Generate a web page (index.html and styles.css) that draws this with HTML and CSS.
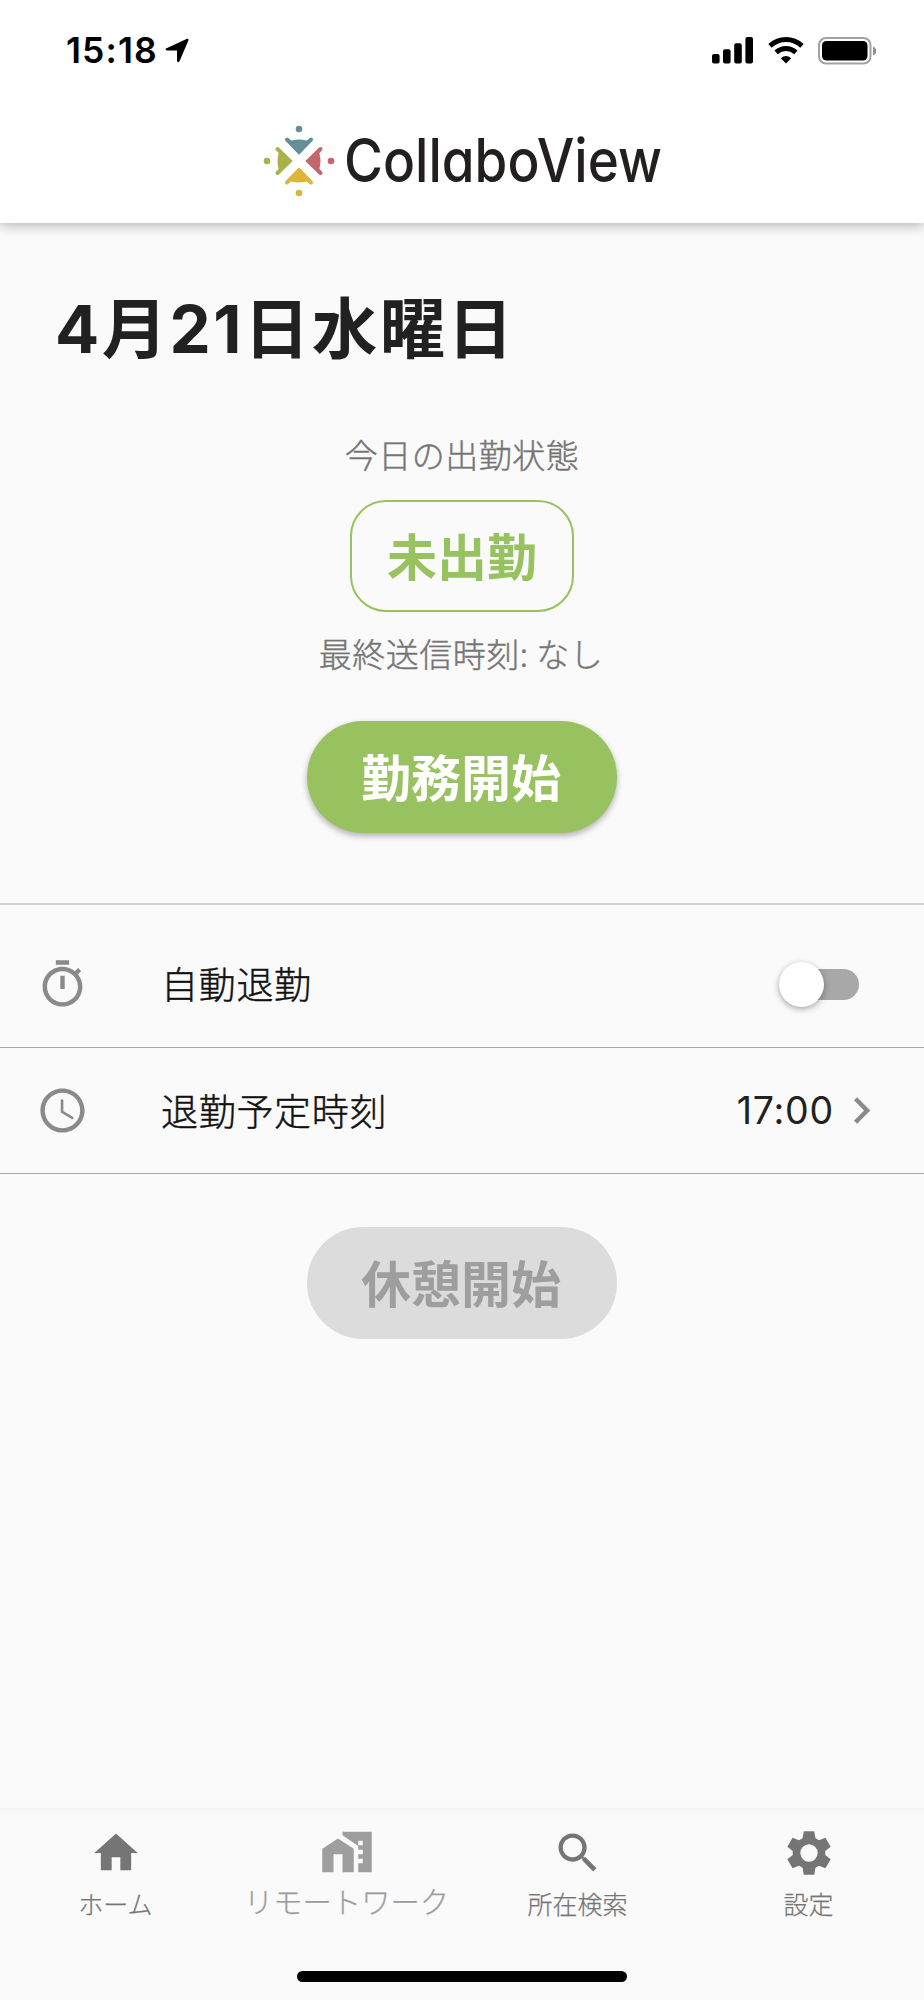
FILE: index.html
```html
<!DOCTYPE html>
<html lang="ja">
<head>
    <meta charset="UTF-8">
    <meta name="viewport" content="width=device-width, initial-scale=1.0">
    <title>CollaboView</title>
    <link rel="stylesheet" href="styles.css">
</head>
<body>
    <header>
        <!-- ステータスバー -->
        <div class="status-bar">
            <div class="status-left">
                <span class="clock">15:18</span>
                <svg class="location" width="24" height="25" viewBox="0 0 24 25"><path d="M1.5 10.2 L21.5 .9 Q24.2 0 23.3 2.8 L14.6 23 Q12.6 25.6 12 22.6 V12.4 H2 Q-1 11.6 1.5 10.2Z"/></svg>
            </div>
            <div class="status-right">
                <svg width="42" height="27" viewBox="0 0 42 27">
                    <rect x="0" y="17" width="7.6" height="9.5" rx="2"/>
                    <rect x="11" y="12.3" width="7.6" height="14.2" rx="2"/>
                    <rect x="22.2" y="6.2" width="7.6" height="20.3" rx="2"/>
                    <rect x="33.4" y="0" width="7.6" height="26.5" rx="2"/>
                </svg>
                <svg width="36" height="27" viewBox="0 0 36 27">
                    <path d="M2 8.8 Q9 2.5 18 2.5 T34 8.8" fill="none" stroke="#000" stroke-width="5"/>
                    <path d="M8.1 15.4 Q12.5 11.5 18 11.5 T27.9 15.4" fill="none" stroke="#000" stroke-width="5"/>
                    <path d="M12.8 21.2 Q18 17 23.2 21.2 L18 26.5Z"/>
                </svg>
                <svg width="59" height="28" viewBox="0 0 59 28">
                    <rect x="1" y="1" width="51.5" height="25.5" rx="7" fill="none" stroke="#a2a2a2" stroke-width="2"/>
                    <rect x="4" y="4" width="45.5" height="19.5" rx="4.5"/>
                    <path d="M55 9.5 Q58.2 10.8 58.2 14 T55 18.5Z" fill="#8f8f8f"/>
                </svg>
            </div>
        </div>
        <!-- ロゴ -->
        <div class="logo">
            <svg width="420" height="94" viewBox="0 -4 420 94">
                <g fill="#648f98"><circle cx="36" cy="4" r="3.3"/><path d="M23 15 L36 29 L49 15 L43.5 15.6 Q36 13.4 28.5 15.6Z"/></g>
                <g fill="#c4666c" transform="rotate(90 36 36)"><circle cx="36" cy="4" r="3.3"/><path d="M23 15 L36 29 L49 15 L43.5 15.6 Q36 13.4 28.5 15.6Z"/></g>
                <g fill="#dfb43c" transform="rotate(180 36 36)"><circle cx="36" cy="4" r="3.3"/><path d="M23 15 L36 29 L49 15 L43.5 15.6 Q36 13.4 28.5 15.6Z"/></g>
                <g fill="#a9b14a" transform="rotate(270 36 36)"><circle cx="36" cy="4" r="3.3"/><path d="M23 15 L36 29 L49 15 L43.5 15.6 Q36 13.4 28.5 15.6Z"/></g>
                <g class="arms">
                    <path d="M24 14.5 L36 26.8 L48 14.5" stroke="#648f98"/>
                    <path d="M57.5 24 L45.2 36 L57.5 48" stroke="#c4666c"/>
                    <path d="M24 57.5 L36 45.2 L48 57.5" stroke="#dfb43c"/>
                    <path d="M14.5 24 L26.8 36 L14.5 48" stroke="#a9b14a"/>
                </g>
                <text class="logo-text" x="81" y="57" textLength="318" lengthAdjust="spacingAndGlyphs">CollaboView</text>
            </svg>
        </div>
    </header>

    <main>
        <h1>4月21日水曜日</h1>

        <!-- 出勤状態 -->
        <section class="attendance">
            <p class="note">今日の出勤状態</p>
            <div class="state">未出勤</div>
            <p class="note last">最終送信時刻: なし</p>
            <button class="btn start">勤務開始</button>
        </section>

        <!-- 設定リスト -->
        <ul class="settings">
            <li class="row auto">
                <svg class="row-icon" viewBox="0 0 24 24"><path d="M15 1H9v2h6V1zm-4 13h2V8h-2v6zm8.03-6.61l1.42-1.42c-.43-.51-.9-.99-1.41-1.41l-1.42 1.42C16.07 4.74 14.12 4 12 4c-4.97 0-9 4.03-9 9s4.02 9 9 9 9-4.03 9-9c0-2.12-.74-4.07-1.97-5.61zM12 20c-3.87 0-7-3.13-7-7s3.13-7 7-7 7 3.13 7 7-3.13 7-7 7z"/></svg>
                <span class="row-label">自動退勤</span>
                <span class="switch"><span class="knob"></span></span>
            </li>
            <li class="row time">
                <svg class="row-icon" viewBox="0 0 24 24"><path d="M11.99 2C6.47 2 2 6.48 2 12s4.47 10 9.99 10C17.52 22 22 17.52 22 12S17.52 2 11.99 2zM12 20c-4.42 0-8-3.58-8-8s3.58-8 8-8 8 3.58 8 8-3.58 8-8 8z"/><path d="M11.8 7.5v5.1l4.6 2.7" fill="none" stroke="#8a8a8a" stroke-width="1.2" stroke-linecap="round"/></svg>
                <span class="row-label">退勤予定時刻</span>
                <span class="row-value">17:00</span>
                <svg class="chevron" viewBox="0 0 24 24"><path d="M10 6L8.59 7.41 13.17 12l-4.58 4.59L10 18l6-6z"/></svg>
            </li>
        </ul>

        <button class="btn rest" disabled>休憩開始</button>
    </main>

    <!-- 下部ナビゲーション -->
    <nav>
        <a class="tab">
            <svg viewBox="0 0 24 24"><path d="M10 20v-6h4v6h5v-8h3L12 3 2 12h3v8z"/></svg>
            <span>ホーム</span>
        </a>
        <a class="tab active">
            <svg viewBox="0 0 24 24"><path d="M1 10.6V21h5v-8h4v8h5V10.6L8 6z"/><path fill-rule="evenodd" d="M10 3v1.6l7 4.7V11h2v2h-2v2h2v2h-2v4h6V3zM17 7h2v2h-2z"/></svg>
            <span>リモートワーク</span>
        </a>
        <a class="tab">
            <svg viewBox="0 0 24 24"><path d="M15.5 14h-.79l-.28-.27C15.41 12.59 16 11.11 16 9.5 16 5.91 13.09 3 9.5 3S3 5.91 3 9.5 5.91 16 9.5 16c1.61 0 3.09-.59 4.23-1.57l.27.28v.79l5 4.99L20.49 19l-4.99-5zm-6 0C7.01 14 5 11.99 5 9.5S7.01 5 9.5 5 14 7.01 14 9.5 11.99 14 9.5 14z"/></svg>
            <span>所在検索</span>
        </a>
        <a class="tab">
            <svg viewBox="0 0 24 24"><path fill-rule="evenodd" d="M9.6 2h4.8l.6 3.2 1.6.9 3-1.1 2.4 4.1-2.5 2v1.8l2.5 2-2.4 4.1-3-1.1-1.6.9-.6 3.2H9.6L9 18.8l-1.6-.9-3 1.1L2 14.9l2.5-2v-1.8L2 9.1 4.4 5l3 1.1L9 5.2zM12 8a4 4 0 1 0 0 8a4 4 0 0 0 0-8z"/></svg>
            <span>設定</span>
        </a>
    </nav>
    <div class="home-indicator"></div>
</body>
</html>
```

FILE: styles.css
```css
* {
    box-sizing: border-box;
}
body {
    display: flex;
    flex-direction: column;
    width: 924px;
    height: 2000px;
    margin: 0;
    background-color: #fafafa;
    color: #212121;
    font-family: Inter, "Noto Sans CJK JP", sans-serif;
}
svg {
    display: block;
}
header {
    height: 223px;
    background-color: #fff;
    box-shadow: 0 2px 12px rgba(0, 0, 0, 0.3);
}
.status-bar {
    display: flex;
    justify-content: space-between;
    height: 121px;
    padding: 37px 47px 0 66px;
}
.status-left, .status-right {
    display: flex;
    align-items: flex-start;
}
.status-right {
    gap: 14px;
}
.clock {
    width: 99px;
    color: #000;
    font-size: 35.5px;
    font-weight: 570;
    letter-spacing: 1.1px;
    line-height: 28px;
}
.location {
    margin-top: 1px;
}
.logo {
    padding-left: 263px;
}
.logo svg {
    overflow: visible;
}
.logo-text {
    fill: #231f1e;
    font-family: Inter, sans-serif;
    font-size: 60px;
    font-weight: 450;
    font-feature-settings: "cv11";
}
.arms path {
    fill: none;
    stroke-width: 4;
    stroke-linecap: round;
}
main {
    display: flex;
    flex-direction: column;
    align-items: center;
    flex: 1;
}
h1 {
    align-self: stretch;
    margin: 67px 0 0 55px;
    font-size: 65.5px;
    font-weight: 650;
    letter-spacing: 2.4px;
    line-height: 80px;
}
.attendance {
    display: flex;
    flex-direction: column;
    align-items: center;
    width: 100%;
    height: 535px;
    padding-top: 64px;
    border-bottom: 2px solid #d2d2d2;
}
.note {
    margin: 0;
    color: #757575;
    font-family: "Noto Sans CJK JP", sans-serif;
    font-size: 33px;
    font-weight: 300;
    letter-spacing: 0.5px;
    line-height: 40px;
    -webkit-text-stroke: 0.4px #757575;
}
.last {
    padding-right: 2px;
}
.state {
    width: 224px;
    height: 112px;
    margin: 26px 0 21px;
    border: 2px solid #97c25f;
    border-radius: 36px;
    color: #97c25f;
    font-size: 50px;
    font-weight: 700;
    line-height: 112px;
    text-align: center;
}
.btn {
    width: 310px;
    height: 112px;
    padding: 0 2px 3px 0;
    border: none;
    border-radius: 56px;
    font-family: "Noto Sans CJK JP", sans-serif;
    font-size: 50px;
    font-weight: 700;
    line-height: 109px;
}
.start {
    margin-top: 48px;
    background-color: #98c25f;
    color: #fff;
    box-shadow: 0 3px 6px rgba(0, 0, 0, 0.3);
}
.rest {
    margin-top: 53px;
    background-color: #dcdcdc;
    color: #9e9e9e;
}
.settings {
    width: 100%;
    margin: 0;
    padding: 0;
    list-style: none;
}
.row {
    display: flex;
    align-items: center;
    padding-left: 36px;
    border-bottom: 1px solid #a6a6a6;
}
.auto {
    height: 143px;
    padding-top: 16px;
    padding-right: 65px;
}
.time {
    height: 126px;
    padding-right: 36px;
}
.row-icon, .chevron {
    width: 53px;
    height: 53px;
    fill: #8a8a8a;
}
.row-label {
    flex: 1;
    margin: -2px 0 0 72px;
    color: #111;
    font-size: 37px;
    font-weight: 300;
    letter-spacing: 0.7px;
    -webkit-text-stroke: 0.4px #111;
}
.row-value {
    margin-right: 1px;
    font-size: 37.5px;
    font-weight: 380;
    letter-spacing: 0.8px;
}
.switch {
    position: relative;
    width: 72px;
    height: 31px;
    border-radius: 16px;
    background-color: #a8a8a8;
}
.knob {
    position: absolute;
    top: -7px;
    left: -8px;
    width: 45px;
    height: 45px;
    border-radius: 50%;
    background-color: #fff;
    box-shadow: 0 2px 6px rgba(0, 0, 0, 0.35);
}
nav {
    display: flex;
    height: 163px;
    border-top: 2px solid #f3f3f3;
}
.tab {
    display: flex;
    flex-direction: column;
    align-items: center;
    width: 231px;
    padding-top: 17px;
    color: #757575;
    font-family: "Noto Sans CJK JP", sans-serif;
    font-size: 25px;
    font-weight: 300;
    line-height: 36px;
    -webkit-text-stroke: 0.25px;
}
.tab svg {
    width: 52px;
    height: 52px;
    margin-bottom: 6px;
    fill: #757575;
    -webkit-text-stroke: 0;
}
.active {
    padding-top: 15px;
    color: #9e9e9e;
    font-size: 29.3px;
}
.active svg {
    width: 54px;
    height: 54px;
    margin-bottom: 3px;
    fill: #9e9e9e;
}
.home-indicator {
    width: 330px;
    height: 11px;
    margin: 0 auto 18px;
    border-radius: 6px;
    background-color: #000;
}
```
